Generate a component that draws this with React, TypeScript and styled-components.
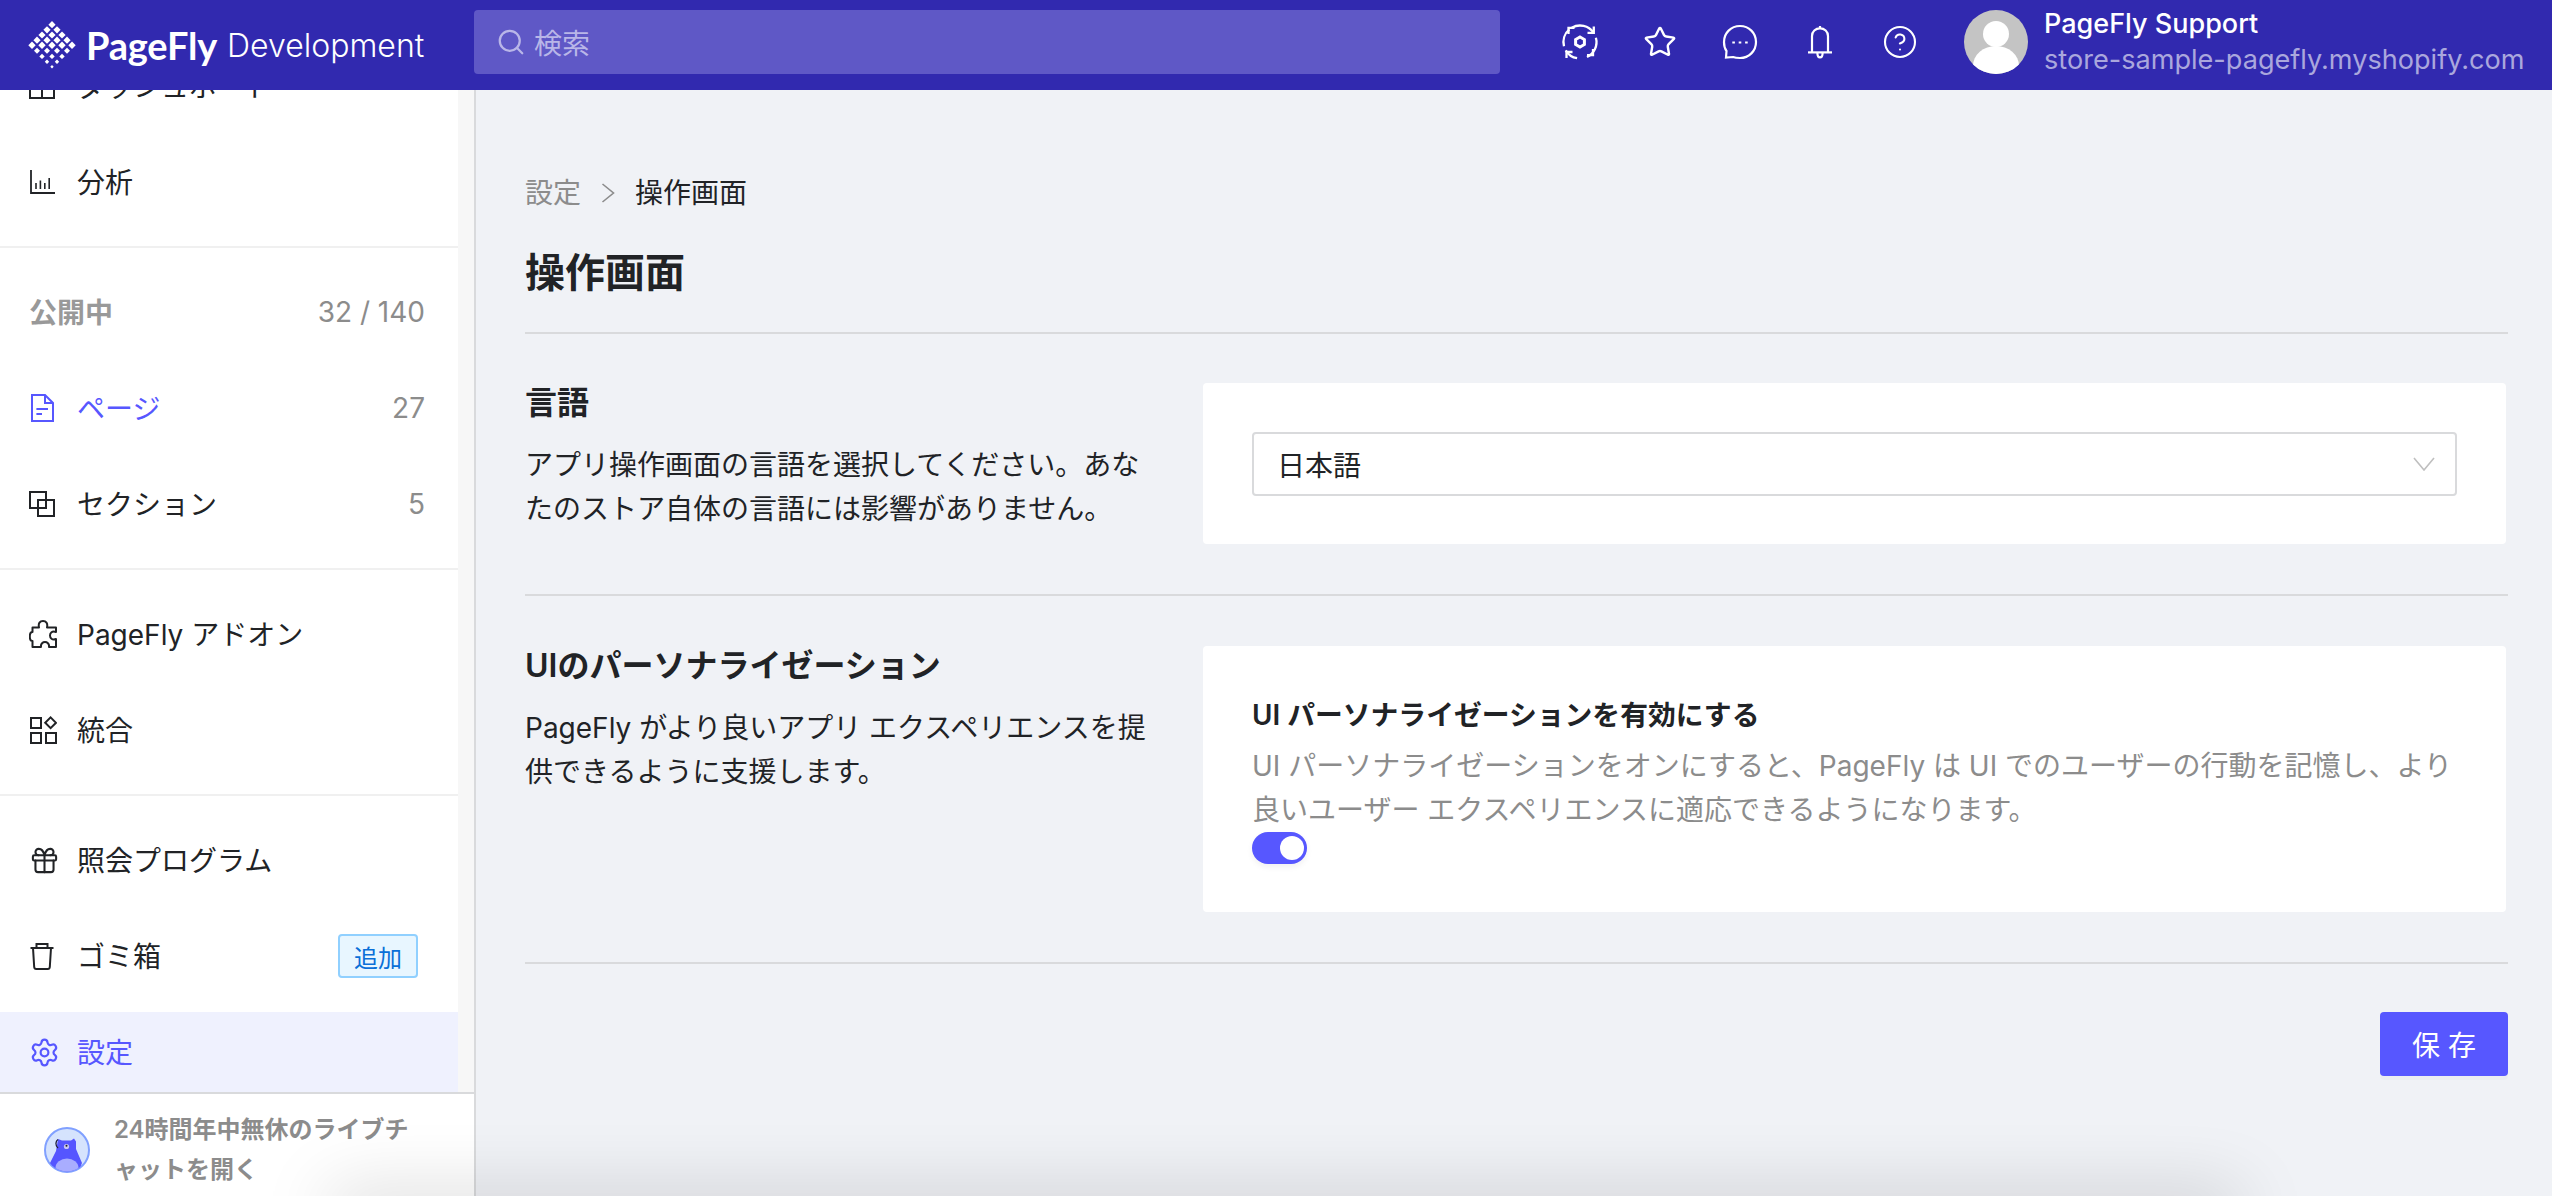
import React, { FC, ReactNode } from 'react'
import styled, { createGlobalStyle } from 'styled-components'
import { CircleHelp, Gift, Search, Settings, Star } from 'lucide-react'

const INK = '#212326'
const GREY = '#8c8c8c'
const PRIMARY = '#5757ff'
const LINE = '#d9dadc'

const GlobalStyle = createGlobalStyle`
  html, body {
    margin: 0;
    height: 100%;
    background: #f0f2f6;
  }
  body {
    font-family: Inter, "Noto Sans CJK JP", sans-serif;
    color: ${INK};
    overflow: hidden;
  }
  * {
    box-sizing: border-box;
  }
`

/* rows of the logo diamond: y, x positions, half diagonal */
const LOGO_ROWS: [number, number[], number][] = [
  [4.7, [32], 3.6],
  [9.8, [27, 37], 3.6],
  [15, [22, 32, 42], 3.6],
  [20.2, [17, 27, 37, 47], 3.6],
  [25.2, [12, 22, 32, 42, 52], 3.7],
  [30.8, [17, 27, 37, 47], 3],
  [36.4, [22, 32, 42], 2.7],
  [41.8, [27, 37], 2.2],
  [46.8, [32], 1.7],
]

const Logo = () => (
  <svg width="48" height="48" viewBox="8 1 48 48" fill="#fff">
    {LOGO_ROWS.map(([y, xs, r]) =>
      xs.map((x) => (
        <path key={`${x}-${y}`} d={`M${x} ${y - r}L${x + r} ${y}L${x} ${y + r}L${x - r} ${y}Z`} />
      ))
    )}
  </svg>
)

const SyncGearIcon = () => (
  <svg width="38" height="38" viewBox="0 0 38 38" fill="none" stroke="#fff" strokeWidth="2.3">
    <path d="M10.8 4.7A16.5 16.5 0 0 1 32.5 9.5" />
    <path d="M32.8 3.5V9.8H26.5" />
    <path d="M34.9 14.7A16.5 16.5 0 0 1 26 34" />
    <path d="M32 26V32.2H26" />
    <path d="M16.1 35.2A16.5 16.5 0 0 1 4.7 27.3" />
    <path d="M5.5 35V29H11.5" />
    <path d="M3 23.3A16.5 16.5 0 0 1 8.4 6.4" />
    <path d="M7.5 11V4.8H13.5" />
    <path d="M19 14L23.4 16.5V21.5L19 24L14.6 21.5V16.5Z" strokeWidth="3" />
  </svg>
)

const ChatIcon = () => (
  <svg width="36" height="36" viewBox="0 0 36 36" fill="none" stroke="#fff" strokeWidth="2.2">
    <path d="M18 2C9 2 2 9 2 18C2 22 3 25 4.5 27L4 33.5L11 33C13 33.8 15.4 34 18 34C27 34 34 27 34 18C34 9 27 2 18 2Z" />
    <path d="M11.6 17.4v2M18 17.4v2M24.4 17.4v2" strokeWidth="2.6" />
  </svg>
)

const BellIcon = () => (
  <svg width="26" height="34" viewBox="0 0 26 34" fill="none" stroke="#fff" strokeWidth="2.2">
    <path d="M13 1V3.4" />
    <path d="M5 27V11C5 6.5 8.5 3.4 13 3.4C17.5 3.4 21 6.5 21 11V27" />
    <path d="M1 27.4H25" />
    <path d="M10.4 28C10.4 30.6 11.6 32.4 13 32.4C14.4 32.4 15.6 30.6 15.6 28" />
  </svg>
)

const DashboardIcon = () => (
  <svg width="26" height="26" viewBox="0 0 26 26" fill="none" stroke="currentColor" strokeWidth="2">
    <path d="M1 1H25V25H1ZM1 9H25M13 9V25" />
  </svg>
)

const ChartIcon = () => (
  <svg width="26" height="26" viewBox="0 0 26 26" fill="none" stroke="currentColor" strokeWidth="1.8">
    <path d="M2 1V24H26" />
    <path d="M7 20V14M11.4 20V11.5M15.8 20V14M20.2 20V9" strokeWidth="1.6" />
  </svg>
)

const PageIcon = () => (
  <svg width="26" height="28" viewBox="0 0 26 28" fill="none" stroke="currentColor" strokeWidth="2">
    <path d="M3 1H16L24 9V27H3Z" />
    <path d="M16 1V9H24M7.4 15H19M7.4 20H13" />
  </svg>
)

const SectionIcon = () => (
  <svg width="26" height="26" viewBox="0 0 26 26" fill="none" stroke="currentColor" strokeWidth="2">
    <path d="M1 1H17V17H1Z" />
    <path d="M9 9H25V25H9Z" />
  </svg>
)

const PuzzleIcon = () => (
  <svg width="28" height="28" viewBox="0 0 28 28" fill="none" stroke="currentColor" strokeWidth="2" strokeLinejoin="round">
    <path d="M3.5 7.5H10C9 3 11 1 14 1C17 1 19 3 18 7.5H27V12C23 10.5 21 13 21 15.5C21 18 23 20.5 27 19V27H20C20.5 23.5 18 22 16 22C14 22 11.5 23.5 12 27H3.5V21C1.5 21 0.8 18.5 0.8 16.5C0.8 14 1.5 12 3.5 12Z" />
  </svg>
)

const GridIcon = () => (
  <svg width="28" height="28" viewBox="0 0 28 28" fill="none" stroke="currentColor" strokeWidth="2">
    <path d="M2 2H12V12H2ZM2 17H12V27H2ZM17 17H27V27H17Z" />
    <path d="M21.6 1.4L27 6.8L21.6 12.2L16.2 6.8Z" />
  </svg>
)

const TrashIcon = () => (
  <svg width="26" height="28" viewBox="0 0 26 28" fill="none" stroke="currentColor" strokeWidth="2">
    <path d="M1.5 6H24.5" />
    <path d="M7.5 6V2H18.5V6" />
    <path d="M4 6L5.2 25C5.3 26.2 6 27 7.2 27H18.8C20 27 20.7 26.2 20.8 25L22 6" />
  </svg>
)

const BearIcon = () => (
  <svg width="46" height="46" viewBox="0 0 46 46">
    <defs>
      <clipPath id="bear-clip">
        <circle cx="23" cy="23" r="21.5" />
      </clipPath>
    </defs>
    <circle cx="23" cy="23" r="22" fill="#d5e3fd" stroke="#80a0ff" strokeWidth="2" />
    <g clipPath="url(#bear-clip)">
      <path d="M14 12L18 13.5H27L30 11.5L32 14.5V22L38 36L34 46H10L5 38L12 24Z" fill="#5555ff" />
      <ellipse cx="23" cy="41" rx="11.5" ry="9.5" fill="#a9adff" />
      <circle cx="22.5" cy="19.5" r="2.6" fill="#c9c6f2" />
      <circle cx="22.5" cy="18.8" r="1" fill="#222" />
      <path d="M14 12.5C11.5 14 11 18.5 14 21" fill="none" stroke="#1c1c3a" strokeWidth="1.3" />
    </g>
  </svg>
)

const ChevronIcon = () => (
  <svg width="14" height="20" viewBox="0 0 14 20" fill="none" stroke="#8c8c8c" strokeWidth="1.6">
    <path d="M1.5 1L12.5 10L1.5 19" />
  </svg>
)

const SelectArrow = () => (
  <svg width="22" height="14" viewBox="0 0 22 14" fill="none" stroke="#bfbfbf" strokeWidth="1.6">
    <path d="M1 1L11 13L21 1" />
  </svg>
)

interface NavRowProps {
  icon: ReactNode
  label: string
  active?: boolean
  accent?: boolean
  right?: ReactNode
}

const NavRow: FC<NavRowProps> = ({ icon, label, active, accent, right }) => (
  <Row $active={active} $accent={accent}>
    <RowIcon>{icon}</RowIcon>
    <RowLabel>{label}</RowLabel>
    {right}
  </Row>
)

const App = () => (
  <Page>
    <GlobalStyle />
    <TopBar>
      <Brand>
        <Logo />
        <BrandName>PageFly</BrandName>
        <BrandSuffix>Development</BrandSuffix>
      </Brand>
      <SearchBox>
        <Search size={30} strokeWidth={1.8} color="#b9b6e8" />
        <span>検索</span>
      </SearchBox>
      <TopIcons>
        <TopIcon>
          <SyncGearIcon />
        </TopIcon>
        <TopIcon>
          <Star size={34} strokeWidth={1.7} />
        </TopIcon>
        <TopIcon>
          <ChatIcon />
        </TopIcon>
        <TopIcon>
          <BellIcon />
        </TopIcon>
        <TopIcon>
          <CircleHelp size={36} strokeWidth={1.4} />
        </TopIcon>
      </TopIcons>
      <Avatar>
        <svg width="64" height="64" viewBox="0 0 64 64">
          <circle cx="32" cy="24" r="13" fill="#fff" />
          <ellipse cx="32" cy="56" rx="23" ry="20" fill="#fff" />
        </svg>
      </Avatar>
      <Account>
        <AccountName>PageFly Support</AccountName>
        <AccountStore>store-sample-pagefly.myshopify.com</AccountStore>
      </Account>
    </TopBar>

    <Body>
      <Sidebar>
        <SideScroll>
          <Nav>
            <NavGroup>
              <NavRow icon={<DashboardIcon />} label="ダッシュボード" />
              <NavRow icon={<ChartIcon />} label="分析" />
            </NavGroup>
            <NavGroup>
              <PublishedRow>
                <RowLabel>公開中</RowLabel>
                <Count>32 / 140</Count>
              </PublishedRow>
              <NavRow icon={<PageIcon />} label="ページ" accent right={<Count>27</Count>} />
              <NavRow icon={<SectionIcon />} label="セクション" right={<Count>5</Count>} />
            </NavGroup>
            <NavGroup>
              <NavRow icon={<PuzzleIcon />} label="PageFly アドオン" />
              <NavRow icon={<GridIcon />} label="統合" />
            </NavGroup>
            <LastGroup>
              <NavRow icon={<Gift size={31} strokeWidth={1.6} />} label="照会プログラム" />
              <NavRow icon={<TrashIcon />} label="ゴミ箱" right={<NewBadge>追加</NewBadge>} />
              <NavRow icon={<Settings size={31} strokeWidth={1.7} />} label="設定" active accent />
            </LastGroup>
          </Nav>
        </SideScroll>
        <ChatFooter>
          <BearIcon />
          <ChatText>24時間年中無休のライブチャットを開く</ChatText>
        </ChatFooter>
      </Sidebar>

      <Main>
        <Breadcrumb>
          <CrumbLink>設定</CrumbLink>
          <ChevronIcon />
          <span>操作画面</span>
        </Breadcrumb>
        <PageTitle>操作画面</PageTitle>

        <Section>
          <SectionInfo>
            <SectionTitle>言語</SectionTitle>
            <SectionText>
              アプリ操作画面の言語を選択してください。あなたのストア自体の言語には影響がありません。
            </SectionText>
          </SectionInfo>
          <LanguageCard>
            <SelectBox>
              <span>日本語</span>
              <SelectArrow />
            </SelectBox>
          </LanguageCard>
        </Section>

        <Section>
          <SectionInfo>
            <SectionTitle>UIのパーソナライゼーション</SectionTitle>
            <SectionText>
              PageFly がより良いアプリ エクスペリエンスを提供できるように支援します。
            </SectionText>
          </SectionInfo>
          <ToggleCard>
            <ToggleTitle>UI パーソナライゼーションを有効にする</ToggleTitle>
            <ToggleText>
              UI パーソナライゼーションをオンにすると、PageFly は UI でのユーザーの行動を記憶し、より良いユーザー エクスペリエンスに適応できるようになります。
            </ToggleText>
            <Toggle />
          </ToggleCard>
        </Section>

        <Actions>
          <SaveButton>保 存</SaveButton>
        </Actions>
      </Main>
    </Body>
    <BottomShadow />
  </Page>
)

export default App

const Page = styled.div`
  position: relative;
  display: flex;
  flex-direction: column;
  height: 100vh;
  overflow: hidden;
`
const TopBar = styled.header`
  z-index: 2;
  display: flex;
  align-items: center;
  flex: none;
  height: 90px;
  padding-bottom: 6px;
  background: #3129af;
  color: #fff;
`
const Brand = styled.div`
  display: flex;
  align-items: center;
  flex: none;
  width: 474px;
  padding: 6px 0 0 28px;
`
const BrandName = styled.span`
  margin-left: 10px;
  font-family: Lato, Inter, sans-serif;
  font-size: 38px;
  font-weight: 700;
  letter-spacing: -0.2px;
`
const BrandSuffix = styled.span`
  margin-left: 10px;
  font-size: 32px;
  font-weight: 300;
`
const SearchBox = styled.div`
  display: flex;
  align-items: center;
  gap: 8px;
  flex: none;
  width: 1026px;
  height: 64px;
  padding-left: 22px;
  background: #5f58c6;
  border-radius: 4px;
  color: #b9b6e8;
  font-size: 28px;
`
const TopIcons = styled.div`
  display: flex;
  margin-left: 40px;
`
const TopIcon = styled.span`
  display: flex;
  align-items: center;
  justify-content: center;
  width: 80px;
  height: 40px;
`
const Avatar = styled.div`
  flex: none;
  width: 64px;
  height: 64px;
  margin-left: 24px;
  overflow: hidden;
  background: #c4c4c4;
  border-radius: 50%;
`
const Account = styled.div`
  display: flex;
  flex-direction: column;
  margin-left: 16px;
  white-space: nowrap;
`
const AccountName = styled.span`
  font-size: 27px;
  font-weight: 500;
  line-height: 36px;
`
const AccountStore = styled.span`
  color: #aaa7dd;
  font-size: 27.1px;
  line-height: 36px;
`
const Body = styled.div`
  display: flex;
  flex: 1;
  min-height: 0;
`
const Sidebar = styled.aside`
  display: flex;
  flex-direction: column;
  flex: none;
  width: 476px;
  border-right: 2px solid ${LINE};
  background: #f7f7f7;
`
const SideScroll = styled.div`
  flex: 1;
  min-height: 0;
  overflow: hidden;
`
const Nav = styled.nav`
  width: 458px;
  margin-top: -68px;
  background: #fff;
`
const NavGroup = styled.div`
  display: flex;
  flex-direction: column;
  gap: 16px;
  padding: 24px 0;
  border-bottom: 2px solid #f0f0f0;
`
const LastGroup = styled(NavGroup)`
  padding-bottom: 0;
  border-bottom: 0;
`
const Row = styled.div<{ $active?: boolean; $accent?: boolean }>`
  display: flex;
  align-items: center;
  height: 80px;
  padding: 0 33px 0 29px;
  background: ${(p) => (p.$active ? '#eff1fe' : 'transparent')};
  color: ${(p) => (p.$accent ? PRIMARY : INK)};
  font-size: 28px;
  white-space: nowrap;
`
const RowIcon = styled.span`
  display: flex;
  align-items: center;
  justify-content: flex-start;
  flex: none;
  width: 48px;
`
const RowLabel = styled.span`
  padding-bottom: 2px;
`
const PublishedRow = styled(Row)`
  justify-content: space-between;
  color: #999;
  font-weight: 600;
`
const Count = styled.span`
  margin-left: auto;
  color: ${GREY};
  font-size: 28px;
  font-weight: 400;
`
const NewBadge = styled.span`
  display: flex;
  align-items: center;
  justify-content: center;
  width: 80px;
  height: 44px;
  margin: 0 7px 0 auto;
  border: 2px solid #90d0ff;
  border-radius: 4px;
  background: #e8f6ff;
  color: #0a6fd8;
  font-size: 24px;
`
const ChatFooter = styled.div`
  display: flex;
  align-items: center;
  gap: 24px;
  flex: none;
  height: 104px;
  padding: 10px 0 0 44px;
  border-top: 2px solid ${LINE};
  background: #fff;
`
const ChatText = styled.p`
  width: 310px;
  margin: 0;
  color: ${GREY};
  font-size: 24px;
  font-weight: 600;
  line-height: 40px;
`
const Main = styled.main`
  flex: 1;
  min-width: 0;
  padding: 83px 44px 0 49px;
`
const Breadcrumb = styled.div`
  display: flex;
  align-items: center;
  gap: 20px;
  font-size: 28px;
  line-height: 40px;
`
const CrumbLink = styled.span`
  color: ${GREY};
`
const PageTitle = styled.h1`
  margin: 32px 0 31px;
  font-size: 40px;
  font-weight: 600;
  line-height: 56px;
`
const Section = styled.section`
  display: flex;
  gap: 48px;
  padding: 50px 2px 50px 0;
  border-top: 2px solid ${LINE};
  &:first-of-type {
    padding-top: 49px;
  }
  &:last-of-type {
    border-bottom: 2px solid ${LINE};
  }
`
const SectionInfo = styled.div`
  flex: none;
  width: 630px;
`
const SectionTitle = styled.h2`
  margin: 0;
  font-size: 32px;
  font-weight: 600;
  line-height: 40px;
`
const SectionText = styled.p`
  margin: 20px 0 0;
  font-size: 28px;
  line-height: 44px;
`
const Card = styled.div`
  flex: 1;
  background: #fff;
  border-radius: 4px;
`
const LanguageCard = styled(Card)`
  padding: 49px 49px 48px;
`
const ToggleCard = styled(Card)`
  padding: 51px 49px 48px;
`
const SelectBox = styled.div`
  display: flex;
  align-items: center;
  justify-content: space-between;
  height: 64px;
  padding: 0 20px 0 23px;
  border: 2px solid ${LINE};
  border-radius: 4px;
  font-size: 28px;
`
const ToggleTitle = styled.div`
  font-size: 27.8px;
  font-weight: 600;
  line-height: 36px;
`
const ToggleText = styled.p`
  margin: 11px 0 0;
  color: ${GREY};
  font-size: 28px;
  line-height: 44px;
`
const Toggle = styled.div`
  position: relative;
  width: 55px;
  height: 32px;
  background: ${PRIMARY};
  border-radius: 16px;
  box-shadow: 0 3px 6px rgba(0, 0, 0, 0.06);
  &::after {
    content: '';
    position: absolute;
    top: 4px;
    right: 3px;
    width: 24px;
    height: 24px;
    background: #fff;
    border-radius: 50%;
  }
`
const Actions = styled.div`
  display: flex;
  justify-content: flex-end;
  margin-top: 48px;
`
const SaveButton = styled.button`
  width: 128px;
  height: 64px;
  padding: 0;
  border: 0;
  border-radius: 4px;
  background: ${PRIMARY};
  box-shadow: 0 4px 0 rgba(0, 0, 0, 0.02);
  color: #fff;
  font-family: inherit;
  font-size: 28px;
`
const BottomShadow = styled.div`
  position: absolute;
  bottom: -30px;
  left: 330px;
  width: 1910px;
  height: 30px;
  box-shadow: 0 0 70px rgba(0, 0, 0, 0.22);
`
